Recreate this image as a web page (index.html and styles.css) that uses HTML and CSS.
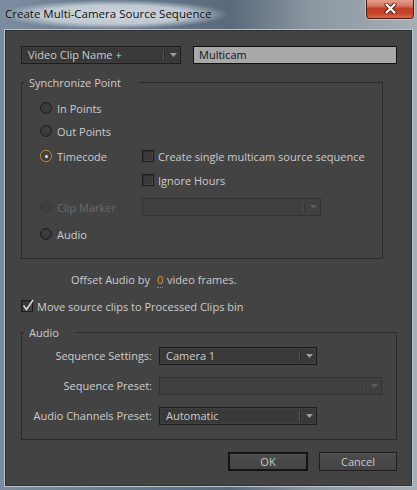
FILE: index.html
```html
<!DOCTYPE html>
<html>
<head>
<meta charset="utf-8">
<link rel="stylesheet" href="styles.css">
</head>
<body>
<div class="window">
  <div class="titlebar">
    <span class="title">Create Multi-Camera Source Sequence</span>
    <div class="close">
      <svg width="13" height="11" viewBox="0 0 13 11"><path d="M2.5 1.5L10.5 9.5M10.5 1.5L2.5 9.5" stroke="#5a2216" stroke-width="4" stroke-linecap="round"/><path d="M2.5 1.5L10.5 9.5M10.5 1.5L2.5 9.5" stroke="#ffffff" stroke-width="2.2" stroke-linecap="round"/></svg>
    </div>
  </div>
  <div class="frame">
    <div class="dialog">
      <div class="top-row">
        <div class="select w160">
          <span class="select-text">Video Clip Name +</span>
          <span class="select-btn"><svg width="7" height="4" viewBox="0 0 7 4"><path d="M0 0H7L3.5 4Z" fill="#9c9c9c"/></svg></span>
        </div>
        <div class="textfield">Multicam</div>
      </div>

      <div class="group sync">
        <div class="group-title">Synchronize Point</div>
        <div class="sync-grid">
          <div class="radio-item"><span class="radio"></span>In Points</div>
          <div></div>
          <div class="radio-item"><span class="radio"></span>Out Points</div>
          <div></div>
          <div class="radio-item"><span class="radio on"></span>Timecode</div>
          <div class="check-item"><span class="checkbox"></span>Create single multicam source sequence</div>
          <div></div>
          <div class="check-item"><span class="checkbox"></span>Ignore Hours</div>
          <div class="radio-item disabled"><span class="radio"></span>Clip Marker</div>
          <div class="select disabled w179">
            <span class="select-text"></span>
            <span class="select-btn"><svg width="7" height="4" viewBox="0 0 7 4"><path d="M0 0H7L3.5 4Z" fill="#5e5e5e"/></svg></span>
          </div>
          <div class="radio-item"><span class="radio"></span>Audio</div>
        </div>
      </div>

      <div class="offset-row">Offset Audio by <span class="num">0</span> video frames.</div>

      <div class="move-row"><span class="checkbox checked"><svg width="14" height="14" viewBox="0 0 14 14"><path d="M2.5 6.5L5.5 10.5L12 1" fill="none" stroke="#d2d2d2" stroke-width="1.7"/></svg></span>Move source clips to Processed Clips bin</div>

      <div class="group audio">
        <div class="group-title">Audio</div>
        <div class="form-grid">
          <div class="form-label">Sequence Settings:</div>
          <div class="select w158">
            <span class="select-text">Camera 1</span>
            <span class="select-btn"><svg width="7" height="4" viewBox="0 0 7 4"><path d="M0 0H7L3.5 4Z" fill="#9c9c9c"/></svg></span>
          </div>
          <div class="form-label">Sequence Preset:</div>
          <div class="select disabled w223">
            <span class="select-text"></span>
            <span class="select-btn"><svg width="7" height="4" viewBox="0 0 7 4"><path d="M0 0H7L3.5 4Z" fill="#5e5e5e"/></svg></span>
          </div>
          <div class="form-label">Audio Channels Preset:</div>
          <div class="select w158">
            <span class="select-text">Automatic</span>
            <span class="select-btn"><svg width="7" height="4" viewBox="0 0 7 4"><path d="M0 0H7L3.5 4Z" fill="#9c9c9c"/></svg></span>
          </div>
        </div>
      </div>

      <div class="buttons">
        <div class="btn default">OK</div>
        <div class="btn cancel">Cancel</div>
      </div>
    </div>
  </div>
</div>
</body>
</html>
```

FILE: styles.css
```css
* { box-sizing: border-box; margin: 0; padding: 0; }
html, body { width: 417px; height: 490px; overflow: hidden; }
body {
  font-family: "Open Sans", "Noto Sans", sans-serif;
  font-size: 11px;
  color: #cccccc;
  background: #7d8c9a;
}
.window {
  width: 417px;
  height: 490px;
  display: flex;
  flex-direction: column;
  background: linear-gradient(90deg, #7a8c9e 0%, #5e7083 45%, #5a6a7b 55%, #8c97a2 75%, #a7aeb5 100%);
}
.titlebar {
  height: 29px;
  display: flex;
  justify-content: space-between;
  align-items: flex-start;
}
.title {
  display: block;
  height: 29px;
  padding: 6px 18px 0 5px;
  font-size: 11.5px;
  color: #101010;
  background: radial-gradient(ellipse closest-side at 50% 50%, rgba(212,220,227,0.95) 0%, rgba(206,214,222,0.85) 65%, rgba(206,214,222,0) 100%);
}
.close {
  width: 48px;
  height: 20px;
  margin: -1px 3px 0 0;
  border: 1px solid #4a1d14;
  border-top: none;
  border-radius: 0 0 4px 4px;
  box-shadow: 0 0 0 1px rgba(255,255,255,0.35);
  background: linear-gradient(180deg, #e6a394 0%, #d67a64 35%, #c2402a 50%, #c4442c 75%, #dd6a4a 100%);
  display: flex;
  align-items: center;
  justify-content: center;
}
.frame {
  flex: 1;
  padding: 0 4px 3px 4px;
  display: flex;
}
.dialog {
  width: 409px;
  height: 458px;
  background: #434343;
  border: 1px solid #bcc4cc;
  box-shadow: inset 0 0 0 1px #303030;
  display: flex;
  flex-direction: column;
}
.top-row {
  display: flex;
  gap: 12px;
  margin: 16px 0 0 16px;
}
.select {
  height: 18px;
  display: flex;
  background: #393939;
  border: 1px solid #1c1c1c;
  box-shadow: inset 0 0 0 1px #3f3f3f;
}
.w160 { width: 160px; }
.w158 { width: 158px; }
.w179 { width: 179px; }
.w223 { width: 223px; }
.select-text {
  flex: 1;
  padding-left: 6px;
  line-height: 16px;
  color: #cccccc;
  white-space: nowrap;
}
.select-btn {
  width: 16px;
  margin: 3px 0;
  border-left: 1px solid #2a2a2a;
  box-shadow: -1px 0 0 #555555;
  display: flex;
  align-items: center;
  justify-content: center;
  padding-left: 1px;
}
.select.disabled {
  background: #404040;
  border-color: #333333;
  box-shadow: none;
}
.select.disabled .select-btn {
  border-left-color: #343434;
  box-shadow: -1px 0 0 #4a4a4a;
}
.textfield {
  width: 204px;
  height: 18px;
  background: #a9a9a9;
  border: 1px solid #101010;
  color: #161616;
  padding-left: 5px;
  line-height: 16px;
}
.group {
  border: 1px solid #2a2a2a;
  margin-left: 16px;
}
.group-title {
  width: fit-content;
  height: 14px;
  line-height: 14px;
  margin: -7px 0 0 2px;
  padding: 0 17px 0 5px;
  background: #434343;
  color: #cccccc;
}
.sync {
  width: 362px;
  margin-top: 18px;
  padding-bottom: 13px;
}
.sync-grid {
  display: grid;
  grid-template-columns: 102px 1fr;
  grid-template-rows: 22px 24px 26px 22px 32px 22px;
  align-items: center;
  margin: 7px 0 0 18px;
}
.radio-item, .check-item {
  display: flex;
  align-items: center;
  white-space: nowrap;
}
.radio {
  width: 12px;
  height: 12px;
  border-radius: 50%;
  border: 1px solid #1c1c1c;
  background: radial-gradient(circle at 50% 40%, #3e3e3e 0%, #363636 100%);
  box-shadow: 0 1px 0 rgba(255,255,255,0.05);
  margin-right: 5px;
  display: flex;
  align-items: center;
  justify-content: center;
}
.radio.on {
  border-color: #c99430;
  background: #444444;
  box-shadow: inset 0 0 0 1px #2a2a2a;
}
.radio.on::after {
  content: "";
  width: 3px;
  height: 3px;
  border-radius: 50%;
  background: #e8e8e8;
}
.radio-item.disabled { color: #6a6a6a; }
.radio-item.disabled .radio {
  border-color: #383838;
  background: #3f3f3f;
}
.checkbox {
  width: 12px;
  height: 12px;
  border: 1px solid #1c1c1c;
  background: #3a3a3a;
  box-shadow: inset 1px 1px 0 #303030, inset -1px -1px 0 #484848;
  margin-right: 4px;
  flex: none;
}
.offset-row {
  margin: 13px 0 0 66px;
  height: 16px;
  line-height: 16px;
  white-space: nowrap;
}
.num {
  color: #d39a2e;
  border-bottom: 1px dotted #b8862a;
  margin: 0 1px 0 4px;
}
.move-row {
  margin: 10px 0 0 16px;
  height: 16px;
  display: flex;
  align-items: center;
  white-space: nowrap;
}
.checkbox.checked {
  position: relative;
}
.checkbox.checked svg {
  position: absolute;
  left: -1px;
  top: -2px;
}
.audio {
  width: 376px;
  margin-top: 18px;
  padding-bottom: 14px;
}
.form-grid {
  display: grid;
  grid-template-columns: 130px auto;
  grid-auto-rows: 18px;
  column-gap: 7px;
  row-gap: 12px;
  margin-top: 7px;
  justify-content: start;
}
.form-label {
  text-align: right;
  line-height: 18px;
  white-space: nowrap;
}
.buttons {
  display: flex;
  gap: 11px;
  margin: 12px 0 0 223px;
}
.btn {
  height: 19px;
  line-height: 17px;
  text-align: center;
  color: #c8c8c8;
  border: 1px solid #1e1e1e;
  background: linear-gradient(180deg, #4c4c4c 0%, #444444 100%);
  box-shadow: inset 0 1px 0 #555555;
}
.btn.default {
  width: 80px;
  border: 2px solid #141414;
  line-height: 15px;
}
.btn.cancel { width: 78px; }
```
